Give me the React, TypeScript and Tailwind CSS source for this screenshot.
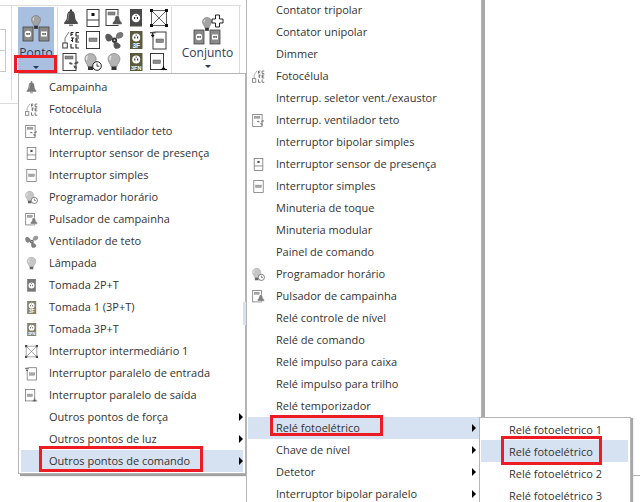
import React from "react";

type IconName = "bell" | "sensor" | "pulsador" | "tomada" | "x" | "foto" | "switch" | "fan" | "t3f" | "entrada" | "ventbox" | "prog" | "bulb" | "t3fn" | "saida";

function BulbShape({ x = 0, y = 0, s = 1 }: { x?: number; y?: number; s?: number }) {
  return (
    <g transform={`translate(${x} ${y}) scale(${s})`}>
      <path d="M5 0.5C2.3 0.5 0.5 2.4 0.5 4.8c0 2.4 1.9 3.6 2.4 6h4.2c0.5-2.4 2.4-3.6 2.4-6C9.5 2.4 7.7 0.5 5 0.5z" fill="#a3a3a3" stroke="#777" strokeWidth="0.6" />
      <path d="M3 2.5c-0.8 0.8-1 2-0.7 3" stroke="#e8e8e8" strokeWidth="1" fill="none" />
      <rect x="3.1" y="10.8" width="3.8" height="3" fill="#333" />
    </g>
  );
}

function SocketShape({ x, y, w, h, dot = "round" }: { x: number; y: number; w: number; h: number; dot?: "round" | "square" }) {
  const cx = x + w / 2;
  const cy = y + h / 2;
  return (
    <g>
      <rect x={x} y={y} width={w} height={h} fill="#8a8a8a" stroke="#444" strokeWidth="0.8" />
      {dot === "round" ? <circle cx={cx} cy={cy} r={w * 0.32} fill="#fff" /> : <rect x={cx - w * 0.3} y={cy - w * 0.25} width={w * 0.6} height={w * 0.5} fill="#fff" />}
      <rect x={cx - w * 0.16} y={cy - 1} width="1.2" height="1.8" fill="#222" />
      <rect x={cx + w * 0.05} y={cy - 1} width="1.2" height="1.8" fill="#222" />
    </g>
  );
}

function Icon({ name, size = 18 }: { name: IconName; size?: number }) {
  const stroke = "#3a3a3a";
  let body: React.ReactNode = null;
  switch (name) {
    case "bell":
      body = (
        <g>
          <rect x="8" y="0.5" width="2" height="2" fill="#333" />
          <path d="M9 2C6 2 5.2 4.2 5 7.5 4.8 10.5 3.8 12 2.2 13.5v1.5h13.6v-1.5C14.2 12 13.2 10.5 13 7.5 12.8 4.2 12 2 9 2z" fill="#4b4b4b" />
          <path d="M7 4C6.3 6 6.5 9 5.5 12" stroke="#9a9a9a" strokeWidth="0.8" fill="none" />
          <rect x="7" y="15.5" width="4" height="1.6" fill="#777" />
        </g>
      );
      break;
    case "sensor":
      body = (
        <g>
          <rect x="3" y="0.5" width="12" height="17" fill="#fff" stroke={stroke} />
          <line x1="3" y1="11" x2="15" y2="11" stroke={stroke} />
          <rect x="7.5" y="4" width="3" height="3" fill="#111" />
        </g>
      );
      break;
    case "pulsador":
      body = (
        <g>
          <rect x="1" y="0.5" width="12" height="16" fill="#fff" stroke={stroke} />
          <rect x="3" y="3" width="7" height="3" fill="#888" stroke="#555" strokeWidth="0.5" />
          <path d="M12 6.5c-1.6 0-2 1.2-2.2 3-0.2 2-1 3-2.3 4v2h9.5v-2c-1.3-1-2.1-2-2.3-4-0.2-1.8-0.7-3-2.7-3z" fill="#555" stroke="#fff" strokeWidth="0.6" />
        </g>
      );
      break;
    case "tomada":
      body = (
        <g>
          <rect x="3" y="0" width="12" height="17.5" fill="#4a4a4a" />
          <circle cx="9" cy="9" r="4.2" fill="#fff" />
          <rect x="7" y="8" width="1.2" height="2" fill="#333" />
          <rect x="9.8" y="8" width="1.2" height="2" fill="#333" />
          <rect x="8.5" y="5.8" width="1.1" height="1.2" fill="#333" />
        </g>
      );
      break;
    case "x":
      body = (
        <g>
          <rect x="1.5" y="1.5" width="15" height="15" fill="none" stroke={stroke} strokeWidth="0.8" />
          <path d="M1.5 1.5L16.5 16.5M16.5 1.5L1.5 16.5" stroke={stroke} strokeWidth="0.8" />
          <rect x="0" y="0" width="3" height="3" fill="#111" />
          <rect x="15" y="0" width="3" height="3" fill="#111" />
          <rect x="0" y="15" width="3" height="3" fill="#111" />
          <rect x="15" y="15" width="3" height="3" fill="#111" />
        </g>
      );
      break;
    case "foto":
      body = (
        <g>
          <path d="M3 12V7L7 1" stroke="#777" strokeWidth="1" fill="none" />
          <rect x="0.8" y="12" width="4.5" height="5" fill="#fff" stroke={stroke} />
          <path d="M9 1.5h2.5M9 1.5v3.5M9 3.2h2M14 1.5h3M14 1.5v3.5h3M9 7h3M10.5 7v4M14 7h3M14 7v4h3M14 9h2M9 13v4h3M14 13v4h3M9 9.5h1" stroke="#222" strokeWidth="1.1" fill="none" />
        </g>
      );
      break;
    case "switch":
      body = (
        <g>
          <rect x="2.5" y="0.5" width="13" height="17" fill="#fff" stroke={stroke} />
          <rect x="5" y="7" width="8" height="3.5" fill="#8c8c8c" stroke="#555" strokeWidth="0.5" />
        </g>
      );
      break;
    case "fan":
      body = (
        <g>
          <path d="M8 7C6 3 3 2 1 3.5-0.5 5 0.5 9.5 3 10.5c2 0.5 4-1 5-3.5z" fill="#5a5a5a" />
          <path d="M11 7C10 3.5 13 0.5 16 1c2.5 0.5 3 3 1.5 5C16 7.5 13 8.5 11 7z" fill="#777" />
          <path d="M9 11.5c3-1 5.5 0.5 6.5 3 0.5 2.5-3 4-5.5 3C8.5 16 8 13.5 9 11.5z" fill="#555" />
          <circle cx="9.5" cy="9.2" r="2.6" fill="#333" />
          <circle cx="9.5" cy="9.2" r="0.9" fill="#ccc" />
        </g>
      );
      break;
    case "t3f":
    case "t3fn":
      body = (
        <g>
          <rect x="3" y="0" width="12.5" height="18" fill="#5c5a3c" />
          <circle cx="9.2" cy="6.5" r="4" fill="#fff" />
          <rect x="7.2" y="5.5" width="1.2" height="2" fill="#333" />
          <rect x="10" y="5.5" width="1.2" height="2" fill="#333" />
          <rect x="8.7" y="3.5" width="1" height="1.2" fill="#333" />
          <text x="9.2" y="16.8" fontSize={name === "t3f" ? 6.5 : 5.5} fontWeight="700" textAnchor="middle" fill="#fff" fontFamily="'Liberation Sans', sans-serif">{name === "t3f" ? "3F" : "3FN"}</text>
        </g>
      );
      break;
    case "entrada":
      body = (
        <g>
          <rect x="3" y="1" width="13" height="17" fill="#fff" stroke={stroke} />
          <rect x="6" y="8" width="7.5" height="3.5" fill="#8c8c8c" stroke="#555" strokeWidth="0.5" />
          <path d="M0 2h5M2.5 0.5v3.5" stroke="#fff" strokeWidth="2.5" />
          <path d="M0 1.8h5.5M2.7 1.8v3.5M1.3 4l1.4 1.5L4.1 4" stroke="#111" strokeWidth="1.1" fill="none" />
        </g>
      );
      break;
    case "saida":
      body = (
        <g>
          <rect x="0.5" y="0.5" width="13" height="16" fill="#fff" stroke={stroke} />
          <rect x="3" y="7" width="7.5" height="3.5" fill="#8c8c8c" stroke="#555" strokeWidth="0.5" />
          <path d="M10.5 16.5h6.5M13.5 13v3.5M12 15l1.5 1.5 1.5-1.5" stroke="#111" strokeWidth="1.1" fill="none" />
        </g>
      );
      break;
    case "ventbox":
      body = (
        <g>
          <rect x="1" y="0.5" width="13" height="17" fill="#fff" stroke={stroke} />
          <rect x="3" y="3" width="8" height="3" fill="#888" stroke="#555" strokeWidth="0.5" />
          <path d="M11 11C9 8.5 7.5 9 7 10c0 1.5 2.5 2 4 1zM12 11c1.5-2.5 3.5-3 4.5-2 0.5 1.5-2.5 3-4.5 2zM11.5 12.5c2-0.5 3.5 1 3.5 2.5-0.5 1.5-3.5 1-3.5-2.5z" fill="#555" />
        </g>
      );
      break;
    case "prog":
      body = (
        <g>
          <path d="M6.5 0.5C3 0.5 0.8 3 0.8 6c0 3 2.4 4.5 3 7.5h5.4c0.6-3 3-4.5 3-7.5 0-3-2.200-5.500-5.700-5.500z" fill="#b4b4b4" stroke="#777" strokeWidth="0.6" />
          <path d="M3.5 3C2.5 4 2.3 5.5 2.7 7" stroke="#eee" strokeWidth="1.2" fill="none" />
          <rect x="4" y="13.5" width="5" height="3.5" fill="#333" />
          <circle cx="13" cy="13" r="4.3" fill="#fff" stroke="#222" strokeWidth="1" />
          <path d="M13 10.5V13.2H15.3" stroke="#222" strokeWidth="0.9" fill="none" />
        </g>
      );
      break;
    case "bulb":
      body = (
        <g>
          <path d="M9 0.5C5.3 0.5 3 3 3 6c0 3 2.5 4.5 3.1 7.500h5.800C12.500 10.500 15 9 15 6c0-3-2.300-5.500-6-5.500z" fill="#b4b4b4" stroke="#777" strokeWidth="0.6" />
          <path d="M6 3C5 4 4.8 5.5 5.2 7" stroke="#eee" strokeWidth="1.2" fill="none" />
          <rect x="6.5" y="13.5" width="5" height="3.5" fill="#333" />
        </g>
      );
      break;
  }
  return (
    <svg width={size} height={size} viewBox="0 0 18 18" className="block overflow-visible shrink-0">
      {body}
    </svg>
  );
}

function Caret() {
  return <span className="block w-0 h-0 border-x-[3.5px] border-x-transparent border-t-[3.5px] border-t-[#1f3864]" />;
}

function Chevron() {
  return <span className="ml-auto block w-0 h-0 border-y-[4px] border-y-transparent border-l-[4px] border-l-black" />;
}

type Row = { t: string; i?: IconName; sub?: boolean; hi?: boolean };

function MenuRow({ r, textX, chevR, raised }: { r: Row; textX: number; chevR: number; raised?: boolean }) {
  return (
    <div className={`flex items-center h-[22px] whitespace-nowrap ${r.hi ? "bg-[#d6e2f2]" : ""}`} style={{ paddingRight: chevR }}>
      <span className="flex items-center justify-start pl-[4px] shrink-0 opacity-75" style={{ width: textX }}>
        {r.i && <Icon name={r.i} size={13} />}
      </span>
      <span className={raised ? "pb-[2px]" : ""}>{r.t}</span>
      {r.sub && <Chevron />}
    </div>
  );
}

const menu1: Row[] = [
  { t: "Campainha", i: "bell" },
  { t: "Fotocélula", i: "foto" },
  { t: "Interrup. ventilador teto", i: "ventbox" },
  { t: "Interruptor sensor de presença", i: "sensor" },
  { t: "Interruptor simples", i: "switch" },
  { t: "Programador horário", i: "prog" },
  { t: "Pulsador de campainha", i: "pulsador" },
  { t: "Ventilador de teto", i: "fan" },
  { t: "Lâmpada", i: "bulb" },
  { t: "Tomada 2P+T", i: "tomada" },
  { t: "Tomada 1 (3P+T)", i: "t3f" },
  { t: "Tomada 3P+T", i: "t3fn" },
  { t: "Interruptor intermediário 1", i: "x" },
  { t: "Interruptor paralelo de entrada", i: "entrada" },
  { t: "Interruptor paralelo de saída", i: "saida" },
  { t: "Outros pontos de força", sub: true },
  { t: "Outros pontos de luz", sub: true },
  { t: "Outros pontos de comando", sub: true, hi: true },
];

const menu2: Row[] = [
  { t: "Contator tripolar" },
  { t: "Contator unipolar" },
  { t: "Dimmer" },
  { t: "Fotocélula", i: "foto" },
  { t: "Interrup. seletor vent./exaustor" },
  { t: "Interrup. ventilador teto", i: "ventbox" },
  { t: "Interruptor bipolar simples" },
  { t: "Interruptor sensor de presença", i: "sensor" },
  { t: "Interruptor simples", i: "switch" },
  { t: "Minuteria de toque" },
  { t: "Minuteria modular" },
  { t: "Painel de comando" },
  { t: "Programador horário", i: "prog" },
  { t: "Pulsador de campainha", i: "pulsador" },
  { t: "Relé controle de nível" },
  { t: "Relé de comando" },
  { t: "Relé impulso para caixa" },
  { t: "Relé impulso para trilho" },
  { t: "Relé temporizador" },
  { t: "Relé fotoelétrico", sub: true, hi: true },
  { t: "Chave de nível", sub: true },
  { t: "Detetor", sub: true },
  { t: "Interruptor bipolar paralelo", sub: true },
];

const menu3: Row[] = [
  { t: "Relé fotoeletrico 1" },
  { t: "Relé fotoelétrico", hi: true },
  { t: "Relé fotoelétrico 2" },
  { t: "Relé fotoelétrico 3" },
];

const grid: IconName[] = ["bell", "sensor", "pulsador", "tomada", "x", "foto", "switch", "fan", "t3f", "entrada", "ventbox", "prog", "bulb", "t3fn", "saida"];

export default function App() {
  return (
    <div className="relative w-[640px] h-[502px] overflow-hidden bg-white text-[#333] text-[11px] leading-none" style={{ fontFamily: "'Open Sans', 'Noto Sans', sans-serif" }}>
      {/* Ribbon */}
      <div className="mt-[5px] flex w-[241px] h-[95px] border-t border-[#dcdcdc] items-start">
        <div className="w-[12px] h-[94px] border-r border-[#dcdcdc] pt-[23px] shrink-0">
          <div className="w-[6px] h-[22px] border border-l-0 border-[#c8c8c8]" />
          <div className="w-[6px] h-[21px] border border-l-0 border-t-0 border-[#c8c8c8]" />
        </div>
        <div className="ml-[6px] mt-[1px] w-[36px] h-[65px] bg-[#a9bfe0] shrink-0 flex flex-col items-center">
          <svg width="36" height="40" viewBox="0 0 36 40" className="block shrink-0">
            <BulbShape x={13} y={8} s={1} />
            <SocketShape x={5} y={20} w={10} h={14} />
            <SocketShape x={21} y={20} w={10} h={14} dot="square" />
          </svg>
          <span className="text-[12px] text-[#2f3a55]">Ponto</span>
          <span className="mt-[7px]"><Caret /></span>
        </div>
        <div className="ml-[3px] mt-[1px] w-[115px] h-[66px] border-x border-[#dcdcdc] shrink-0 grid grid-cols-[26px_18px_24px_19px_27px] auto-rows-[22px] justify-items-center items-center">
          {grid.map((n, i) => (
            <Icon key={i} name={n} />
          ))}
        </div>
        <div className="w-[67px] h-[68px] border-b border-[#dcdcdc] shrink-0 flex flex-col items-center pl-[4px]">
          <svg width="63" height="41" viewBox="0 0 63 41" className="block shrink-0">
            <BulbShape x={26} y={11} s={1} />
            <SocketShape x={18} y={24} w={10} h={14} />
            <SocketShape x={34} y={24} w={10} h={14} dot="square" />
            <path d="M36 13h3.5V9h4v4H47v4h-3.5v4h-4v-4H36z" fill="#fff" stroke="#222" strokeWidth="1" />
          </svg>
          <span className="text-[12px] text-[#2f3a55]">Conjunto</span>
          <span className="mt-[6px]"><Caret /></span>
        </div>
        <div className="h-[90px] border-l border-[#dcdcdc]" />
      </div>
      <div className="w-[18px] border-t border-[#dcdcdc] mt-[3px]" />

      {/* Menu 1 */}
      <div className="absolute left-[18px] top-[73px] w-[228px] h-[401px] bg-white border border-[#b5b5b5] shadow-[2px_2px_1px_#a0a0a0] pt-[2px] pl-[2px] pr-[2px]">
        {menu1.map((r) => (
          <MenuRow key={r.t} r={r} textX={28} chevR={0} raised />
        ))}
      </div>
      <div className="absolute left-[243px] top-[302px] w-[3px] h-[23px] bg-[#d6e2f2]" />

      {/* Menu 2 */}
      <div className="absolute left-[246px] top-[-3px] w-[236px] h-[510px] bg-white border border-[#b5b5b5] shadow-[3px_0_0_#a8a8a8] pt-[1px] pl-[1px]">
        {menu2.map((r) => (
          <MenuRow key={r.t} r={r} textX={28} chevR={5} raised />
        ))}
      </div>

      {/* Menu 3 */}
      <div className="absolute left-[479px] top-[417px] w-[152px] h-[90px] bg-white border border-[#b5b5b5] shadow-[2px_1px_1px_#a8a8a8] pt-0 pl-[1px] pr-[2px]">
        {menu3.map((r) => (
          <MenuRow key={r.t} r={r} textX={28} chevR={0} />
        ))}
      </div>
      <div className="absolute left-[633px] top-[475px] w-[7px] h-px bg-[#b5b5b5]" />

      {/* Red annotations */}
      <div className="absolute left-[14px] top-[55px] w-[43px] h-[18px] border-[3px] border-[#ed1c24]" />
      <div className="absolute left-[39px] top-[446px] w-[164px] h-[26px] border-[3px] border-[#ed1c24]" />
      <div className="absolute left-[270px] top-[415px] w-[113px] h-[21px] border-[3px] border-[#ed1c24]" />
      <div className="absolute left-[501px] top-[436px] w-[101px] h-[29px] border-[3px] border-[#ed1c24]" />
    </div>
  );
}
